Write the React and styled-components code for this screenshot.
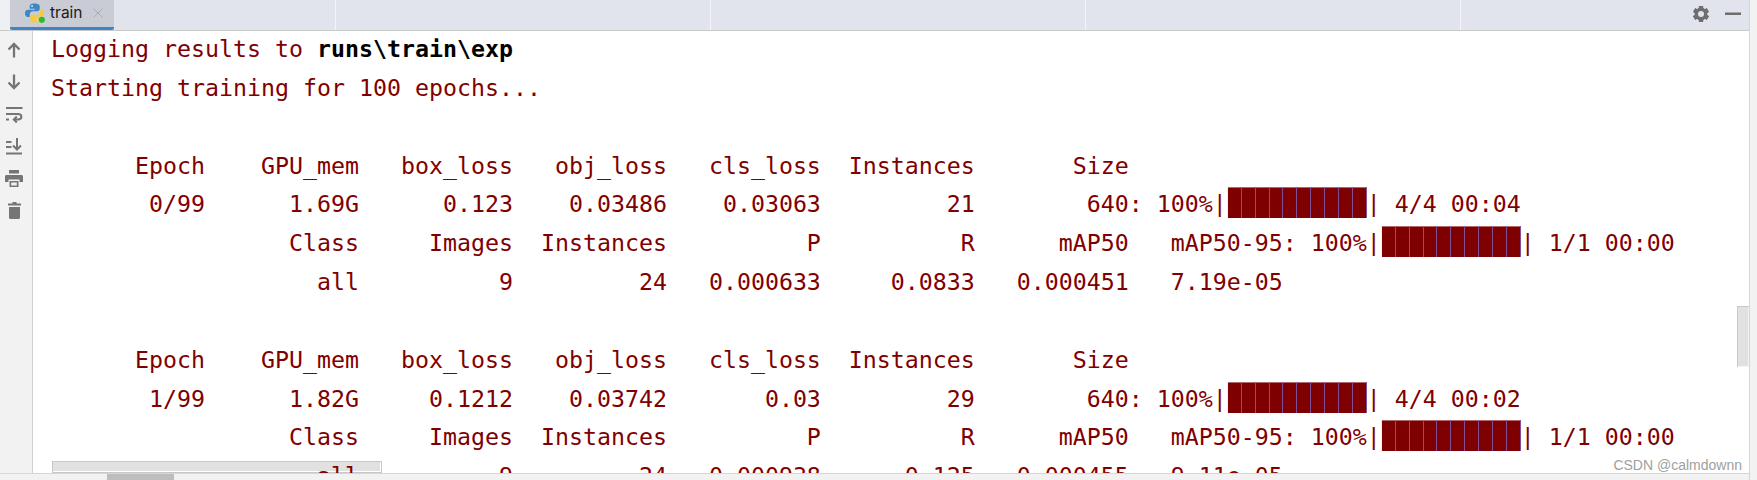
import React from "react";
import styled, { createGlobalStyle } from "styled-components";

const Global = createGlobalStyle`
  html, body { margin: 0; padding: 0; width: 1757px; height: 480px; overflow: hidden; background: #f2f2f2; }
  #root { width: 1757px; height: 480px; }
`;

const Frame = styled.div`
  width: 1757px; height: 480px; display: flex; flex-direction: column; overflow: hidden;
  background: #f2f2f2; position: relative;
`;
const Main = styled.div`
  flex: 1; min-height: 0; display: flex; flex-direction: column; margin-right: 7px;
  border-right: 1px solid #d6d6d6;
`;
const TabBar = styled.div`
  height: 30px; flex: none; display: flex; background: #e1e4ec; border-bottom: 1px solid #c9c9c9;
`;
const TabGutter = styled.div`
  width: 10px; flex: none; background: #eef0f3;
`;
const Tab = styled.div`
  width: 104px; flex: none; box-sizing: border-box; height: 30px; background: #c9ccd5;
  border-bottom: 3px solid #4083c9; border-radius: 0 0 2px 2px; display: flex; align-items: center; padding: 0 0 2px 15px;
  font: 15.5px "Inter", "Open Sans", sans-serif; color: #1a1a1a; gap: 5px;
`;
const TabClose = styled.span`
  margin-left: 5px; display: flex;
`;
const TabCell = styled.div`
  width: ${p => p.$w}px; flex: none; border-right: 1px solid #f4f5f8; box-sizing: border-box;
`;
const TabActions = styled.div`
  flex: 1; display: flex; align-items: center; justify-content: flex-end; gap: 16px; padding-right: 8px; padding-bottom: 3px;
`;
const Body = styled.div`
  flex: 1; min-height: 0; display: flex;
`;
const SideBar = styled.div`
  width: 33px; flex: none; box-sizing: border-box; border-right: 1px solid #d1d1d1; background: #f2f2f2;
  display: flex; flex-direction: column; padding-top: 3px;
`;
const SideSlot = styled.div`
  width: 28px; height: 32px; flex: none; display: flex; align-items: center; justify-content: center;
`;
const Console = styled.div`
  flex: 1; min-width: 0; background: #fff; overflow: hidden; position: relative; padding-left: 18px;
`;
const Out = styled.pre`
  margin: -1px 0 0; font-family: "DejaVu Sans Mono", "Liberation Mono", monospace; font-size: 23.25px; line-height: 38.85px;
  color: #7f0000; position: relative; z-index: 1;
`;
const Strong = styled.span`
  font-weight: bold; color: #000;
`;
const Bar = styled.span`
  display: inline-flex; vertical-align: -6px; height: 31px; width: 140px; background: #7f0000;
  box-shadow: inset 0 1px 0 #b06a6a;
`;
const Block = styled.span`
  flex: 1; border-right: 1px solid #80509a;
  &:first-child { border-left: 1px solid #fff2c0; }
`;
const Hint = styled.div`
  position: absolute; left: 19px; bottom: 0; width: 330px; height: 12px; box-sizing: border-box;
  background: #e1e1e1; border: 1px solid #c8c8c8; box-shadow: inset 0 -1px 0 #fff, inset -1px 0 0 #fff;
`;
const BottomBar = styled.div`
  height: 6px; flex: none; background: #f2f2f2; border-top: 1px solid #d6d6d6; padding-left: 107px;
`;
const HThumb = styled.div`
  width: 67px; height: 6px; background: #bdbdbd;
`;
const VThumb = styled.div`
  position: absolute; right: 0; top: 275px; width: 12px; height: 61px; box-sizing: border-box; background: #e1e1e1;
  border-left: 1px solid #c8c8c8; border-top: 1px solid #c8c8c8; box-shadow: inset 0 -1px 0 #f4f4f4, inset -1px 0 0 #f4f4f4;
`;
const Mark = styled.div`
  position: absolute; right: 7px; bottom: 0; z-index: 2; font: 14px "Liberation Sans", sans-serif; color: #a0a0a0; line-height: 16px;
`;

const Fill = () => (
  <Bar>{Array.from({ length: 10 }, (_, i) => <Block key={i} />)}</Bar>
);

const Ico = ({ children, w = 20, h = 20 }) => (
  <svg width={w} height={h} viewBox={`0 0 ${w} ${h}`} fill="none">{children}</svg>
);

const Python = () => (
  <svg width="20" height="20" viewBox="0 0 19 19">
    <path d="M8.500 0.500c-3 0-4 1-4 2.700V5.500h4.800v.8H2.800C1 6.300 0 7.600 0 9.700s1 3.600 2.800 3.600h1.700v-2.400c0-1.700 1.300-3 3-3h4c1.400 0 2.500-1.100 2.500-2.500V3.200c0-1.600-1.600-2.700-5.500-2.700z" fill="#3d88c4"/>
    <circle cx="6.700" cy="2.900" r=".9" fill="#e1e4ec"/>
    <path d="M14.500 5.900v2.200c0 1.700-1.300 3-3 3h-4C6 11.100 5 12.200 5 13.600v2.200c0 1.700 1.800 2.700 4.500 2.700 3 0 4.600-1 4.600-2.700v-2.200H9.600v-.8h6.200c1.700 0 2.400-1.400 2.400-3.300 0-2.200-.8-3.600-2.400-3.600z" fill="#f7c93e"/>
    <circle cx="11.800" cy="16" r=".9" fill="#e1e4ec"/>
    <circle cx="16" cy="16" r="2.900" fill="#24c02c"/>
  </svg>
);

const X = () => (
  <Ico w={10} h={10}><path d="M.5.5l9 9M9.500.5l-9 9" stroke="#a9acb3" strokeWidth="1"/></Ico>
);
const Gear = () => (
  <Ico w={16} h={16}>
    <circle cx="8" cy="8" r="4.700" stroke="#6e6e6e" strokeWidth="3.400"/>
    {[0, 60, 120, 180, 240, 300].map(a => (
      <rect key={a} x="5.800" y="0" width="4.400" height="3.500" fill="#6e6e6e" transform={`rotate(${a} 8 8)`}/>
    ))}
  </Ico>
);
const Minus = () => <Ico w={16} h={16}><rect y="6.500" width="16" height="2.500" fill="#6e6e6e"/></Ico>;
const S = "#757575";
const Up = () => <Ico w={14} h={16}><path d="M7 15.500V2M1.500 7.500L7 2l5.500 5.500" stroke={S} strokeWidth="2.300"/></Ico>;
const Down = () => <Ico w={14} h={16}><path d="M7 .5V14M1.500 8.500L7 14l5.500-5.500" stroke={S} strokeWidth="2.300"/></Ico>;
const Wrap = () => (
  <Ico w={17} h={17}>
    <path d="M0 2h16.500M0 8h12c4.500 0 4.500 5.500 0 5.500H8M10.800 10.500L7.800 13.500l3 3M0 13.500h3" stroke={S} strokeWidth="2"/>
  </Ico>
);
const Scroll = () => (
  <Ico w={17} h={17}>
    <path d="M0 4h5.500M0 9h5.500M0 15.500h16M11 0v11M7 7.500l4 4 4-4" stroke={S} strokeWidth="2"/>
  </Ico>
);
const Printer = () => (
  <Ico w={18} h={17}>
    <path d="M4 0h10v3.500H4zM1.500 5h15c.8 0 1.500.7 1.500 1.500V12h-3.500V9.500h-11V12H0V6.500C0 5.700.7 5 1.500 5zM4.500 11h9v6h-9zM6.200 12.500v3h5.600v-3z" fill={S} fillRule="evenodd"/>
  </Ico>
);
const Trash = () => (
  <Ico w={13} h={17}>
    <path d="M4.500 0h4v1.500H13V3.500H0V1.500h4.500zM1 5h11v10.500c0 .8-.7 1.500-1.500 1.500h-8C1.700 17 1 16.300 1 15.500z" fill={S}/>
  </Ico>
);

export default function App() {
  return (
    <Frame>
      <Global />
      <Main>
        <TabBar>
          <TabGutter />
          <Tab><Python /><span>train</span><TabClose><X /></TabClose></Tab>
          <TabCell $w={222} />
          <TabCell $w={375} />
          <TabCell $w={375} />
          <TabCell $w={375} />
          <TabActions><Gear /><Minus /></TabActions>
        </TabBar>
        <Body>
          <SideBar>
            <SideSlot><Up /></SideSlot>
            <SideSlot><Down /></SideSlot>
            <SideSlot><Wrap /></SideSlot>
            <SideSlot><Scroll /></SideSlot>
            <SideSlot><Printer /></SideSlot>
            <SideSlot><Trash /></SideSlot>
          </SideBar>
          <Console>
            <Hint />
            <Out>{`Logging results to `}<Strong>{`runs\\train\\exp`}</Strong>{`
Starting training for 100 epochs...

      Epoch    GPU_mem   box_loss   obj_loss   cls_loss  Instances       Size
       0/99      1.69G      0.123    0.03486    0.03063         21        640: 100%|`}<Fill />{`| 4/4 00:04
                 Class     Images  Instances          P          R      mAP50   mAP50-95: 100%|`}<Fill />{`| 1/1 00:00
                   all          9         24   0.000633     0.0833   0.000451   7.19e-05

      Epoch    GPU_mem   box_loss   obj_loss   cls_loss  Instances       Size
       1/99      1.82G     0.1212    0.03742       0.03         29        640: 100%|`}<Fill />{`| 4/4 00:02
                 Class     Images  Instances          P          R      mAP50   mAP50-95: 100%|`}<Fill />{`| 1/1 00:00
                   all          9         24   0.000938      0.125   0.000455   9.11e-05`}</Out>
            <VThumb />
            <Mark>CSDN @calmdownn</Mark>
          </Console>
        </Body>
        <BottomBar><HThumb /></BottomBar>
      </Main>
    </Frame>
  );
}
